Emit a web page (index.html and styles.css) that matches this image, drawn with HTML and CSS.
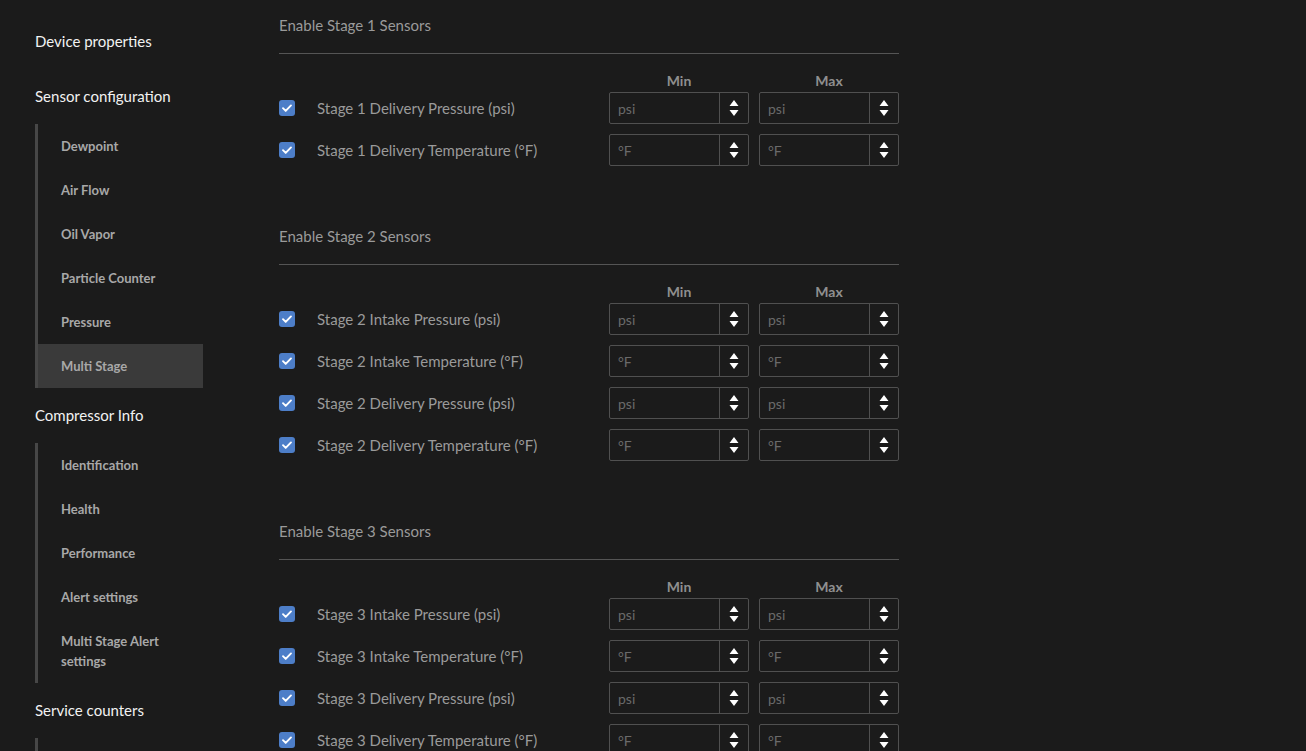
FILE: index.html
```html
<!DOCTYPE html>
<html>
<head>
<meta charset="utf-8">
<link rel="stylesheet" href="styles.css">
</head>
<body>
<div class="app">
  <nav class="sidebar">
    <div class="nav-top">Device properties</div>
    <div class="nav-top">Sensor configuration</div>
    <div class="submenu">
      <div class="nav-sub">Dewpoint</div>
      <div class="nav-sub">Air Flow</div>
      <div class="nav-sub">Oil Vapor</div>
      <div class="nav-sub">Particle Counter</div>
      <div class="nav-sub">Pressure</div>
      <div class="nav-sub active">Multi Stage</div>
    </div>
    <div class="nav-top">Compressor Info</div>
    <div class="submenu">
      <div class="nav-sub">Identification</div>
      <div class="nav-sub">Health</div>
      <div class="nav-sub">Performance</div>
      <div class="nav-sub">Alert settings</div>
      <div class="nav-sub">Multi Stage Alert settings</div>
    </div>
    <div class="nav-top">Service counters</div>
    <div class="submenu">
      <div class="nav-sub">&nbsp;</div>
    </div>
  </nav>
  <main class="content">
    <section class="stage">
      <div class="stage-title">Enable Stage 1 Sensors</div>
      <div class="grid">
        <div></div><div class="col-label">Min</div><div class="col-label">Max</div>
        <label class="sensor"><span class="check"><svg viewBox="0 0 16 16"><path d="M4 8.2l2.7 2.7L12 5.4" /></svg></span>Stage 1 Delivery Pressure (psi)</label>
        <div class="num"><input placeholder="psi"><span class="spin"><svg viewBox="0 0 12 20"><path d="M6 2l4.5 6h-9z M6 18l4.5-6h-9z"/></svg></span></div>
        <div class="num"><input placeholder="psi"><span class="spin"><svg viewBox="0 0 12 20"><path d="M6 2l4.5 6h-9z M6 18l4.5-6h-9z"/></svg></span></div>
        <label class="sensor"><span class="check"><svg viewBox="0 0 16 16"><path d="M4 8.2l2.7 2.7L12 5.4" /></svg></span>Stage 1 Delivery Temperature (°F)</label>
        <div class="num"><input placeholder="°F"><span class="spin"><svg viewBox="0 0 12 20"><path d="M6 2l4.5 6h-9z M6 18l4.5-6h-9z"/></svg></span></div>
        <div class="num"><input placeholder="°F"><span class="spin"><svg viewBox="0 0 12 20"><path d="M6 2l4.5 6h-9z M6 18l4.5-6h-9z"/></svg></span></div>
      </div>
    </section>
    <section class="stage">
      <div class="stage-title">Enable Stage 2 Sensors</div>
      <div class="grid">
        <div></div><div class="col-label">Min</div><div class="col-label">Max</div>
        <label class="sensor"><span class="check"><svg viewBox="0 0 16 16"><path d="M4 8.2l2.7 2.7L12 5.4" /></svg></span>Stage 2 Intake Pressure (psi)</label>
        <div class="num"><input placeholder="psi"><span class="spin"><svg viewBox="0 0 12 20"><path d="M6 2l4.5 6h-9z M6 18l4.5-6h-9z"/></svg></span></div>
        <div class="num"><input placeholder="psi"><span class="spin"><svg viewBox="0 0 12 20"><path d="M6 2l4.5 6h-9z M6 18l4.5-6h-9z"/></svg></span></div>
        <label class="sensor"><span class="check"><svg viewBox="0 0 16 16"><path d="M4 8.2l2.7 2.7L12 5.4" /></svg></span>Stage 2 Intake Temperature (°F)</label>
        <div class="num"><input placeholder="°F"><span class="spin"><svg viewBox="0 0 12 20"><path d="M6 2l4.5 6h-9z M6 18l4.5-6h-9z"/></svg></span></div>
        <div class="num"><input placeholder="°F"><span class="spin"><svg viewBox="0 0 12 20"><path d="M6 2l4.5 6h-9z M6 18l4.5-6h-9z"/></svg></span></div>
        <label class="sensor"><span class="check"><svg viewBox="0 0 16 16"><path d="M4 8.2l2.7 2.7L12 5.4" /></svg></span>Stage 2 Delivery Pressure (psi)</label>
        <div class="num"><input placeholder="psi"><span class="spin"><svg viewBox="0 0 12 20"><path d="M6 2l4.5 6h-9z M6 18l4.5-6h-9z"/></svg></span></div>
        <div class="num"><input placeholder="psi"><span class="spin"><svg viewBox="0 0 12 20"><path d="M6 2l4.5 6h-9z M6 18l4.5-6h-9z"/></svg></span></div>
        <label class="sensor"><span class="check"><svg viewBox="0 0 16 16"><path d="M4 8.2l2.7 2.7L12 5.4" /></svg></span>Stage 2 Delivery Temperature (°F)</label>
        <div class="num"><input placeholder="°F"><span class="spin"><svg viewBox="0 0 12 20"><path d="M6 2l4.5 6h-9z M6 18l4.5-6h-9z"/></svg></span></div>
        <div class="num"><input placeholder="°F"><span class="spin"><svg viewBox="0 0 12 20"><path d="M6 2l4.5 6h-9z M6 18l4.5-6h-9z"/></svg></span></div>
      </div>
    </section>
    <section class="stage">
      <div class="stage-title">Enable Stage 3 Sensors</div>
      <div class="grid">
        <div></div><div class="col-label">Min</div><div class="col-label">Max</div>
        <label class="sensor"><span class="check"><svg viewBox="0 0 16 16"><path d="M4 8.2l2.7 2.7L12 5.4" /></svg></span>Stage 3 Intake Pressure (psi)</label>
        <div class="num"><input placeholder="psi"><span class="spin"><svg viewBox="0 0 12 20"><path d="M6 2l4.5 6h-9z M6 18l4.5-6h-9z"/></svg></span></div>
        <div class="num"><input placeholder="psi"><span class="spin"><svg viewBox="0 0 12 20"><path d="M6 2l4.5 6h-9z M6 18l4.5-6h-9z"/></svg></span></div>
        <label class="sensor"><span class="check"><svg viewBox="0 0 16 16"><path d="M4 8.2l2.7 2.7L12 5.4" /></svg></span>Stage 3 Intake Temperature (°F)</label>
        <div class="num"><input placeholder="°F"><span class="spin"><svg viewBox="0 0 12 20"><path d="M6 2l4.5 6h-9z M6 18l4.5-6h-9z"/></svg></span></div>
        <div class="num"><input placeholder="°F"><span class="spin"><svg viewBox="0 0 12 20"><path d="M6 2l4.5 6h-9z M6 18l4.5-6h-9z"/></svg></span></div>
        <label class="sensor"><span class="check"><svg viewBox="0 0 16 16"><path d="M4 8.2l2.7 2.7L12 5.4" /></svg></span>Stage 3 Delivery Pressure (psi)</label>
        <div class="num"><input placeholder="psi"><span class="spin"><svg viewBox="0 0 12 20"><path d="M6 2l4.5 6h-9z M6 18l4.5-6h-9z"/></svg></span></div>
        <div class="num"><input placeholder="psi"><span class="spin"><svg viewBox="0 0 12 20"><path d="M6 2l4.5 6h-9z M6 18l4.5-6h-9z"/></svg></span></div>
        <label class="sensor"><span class="check"><svg viewBox="0 0 16 16"><path d="M4 8.2l2.7 2.7L12 5.4" /></svg></span>Stage 3 Delivery Temperature (°F)</label>
        <div class="num"><input placeholder="°F"><span class="spin"><svg viewBox="0 0 12 20"><path d="M6 2l4.5 6h-9z M6 18l4.5-6h-9z"/></svg></span></div>
        <div class="num"><input placeholder="°F"><span class="spin"><svg viewBox="0 0 12 20"><path d="M6 2l4.5 6h-9z M6 18l4.5-6h-9z"/></svg></span></div>
      </div>
    </section>
  </main>
</div>
</body>
</html>
```

FILE: styles.css
```css
html, body {
  margin: 0;
  padding: 0;
  background: #1b1b1b;
  height: 100%;
  overflow: hidden;
}
body {
  font-family: Lato, "Liberation Sans", sans-serif;
  color: #999;
}
.app {
  display: flex;
  align-items: flex-start;
}
.sidebar {
  width: 279px;
  box-sizing: border-box;
  padding: 13px 0 0 35px;
  flex: none;
}
.nav-top {
  height: 55px;
  display: flex;
  align-items: center;
  font-size: 15px;
  color: #f2f2f2;
}
.submenu {
  width: 168px;
  border-left: 3px solid #474747;
  box-sizing: border-box;
  margin: 1px 0 -1px;
}
.nav-sub {
  padding: 12px 10px 12px 23px;
  line-height: 20px;
  font-size: 13px;
  font-weight: 700;
  color: #a8a8a8;
}
.nav-sub.active {
  background: #3a3a3a;
}
.content {
  width: 620px;
  padding-top: 15px;
  flex: none;
}
.stage {
  margin-bottom: 60px;
}
.stage-title {
  font-size: 15px;
  line-height: 20px;
  color: #9a9a9a;
  padding-bottom: 18px;
  border-bottom: 1px solid #555;
}
.grid {
  margin-top: 17px;
  display: grid;
  grid-template-columns: 1fr 140px 140px;
  column-gap: 10px;
  row-gap: 10px;
}
.col-label {
  text-align: center;
  font-size: 14px;
  font-weight: 700;
  line-height: 20px;
  color: #8f8f8f;
  margin-bottom: -9px;
}
.sensor {
  display: flex;
  align-items: center;
  font-size: 15px;
  color: #9a9a9a;
}
.check {
  width: 16px;
  height: 16px;
  border-radius: 3px;
  background: #4d7ec8;
  margin-right: 22px;
  display: flex;
  flex: none;
}
.check svg {
  width: 16px;
  height: 16px;
  fill: none;
  stroke: #fff;
  stroke-width: 1.9;
  stroke-linecap: round;
  stroke-linejoin: round;
}
.num {
  height: 32px;
  box-sizing: border-box;
  border: 1px solid #505050;
  border-radius: 2px;
  display: flex;
}
.num input {
  flex: 1;
  min-width: 0;
  background: transparent;
  border: none;
  outline: none;
  padding: 0 0 0 8px;
  font-family: Lato, "Liberation Sans", sans-serif;
  font-size: 14px;
  color: #ccc;
}
.num input::placeholder {
  color: #6a6a6a;
}
.spin {
  width: 28px;
  border-left: 1px solid #505050;
  display: flex;
  align-items: center;
  justify-content: center;
}
.spin svg {
  width: 12px;
  height: 20px;
  fill: #fff;
}
```
